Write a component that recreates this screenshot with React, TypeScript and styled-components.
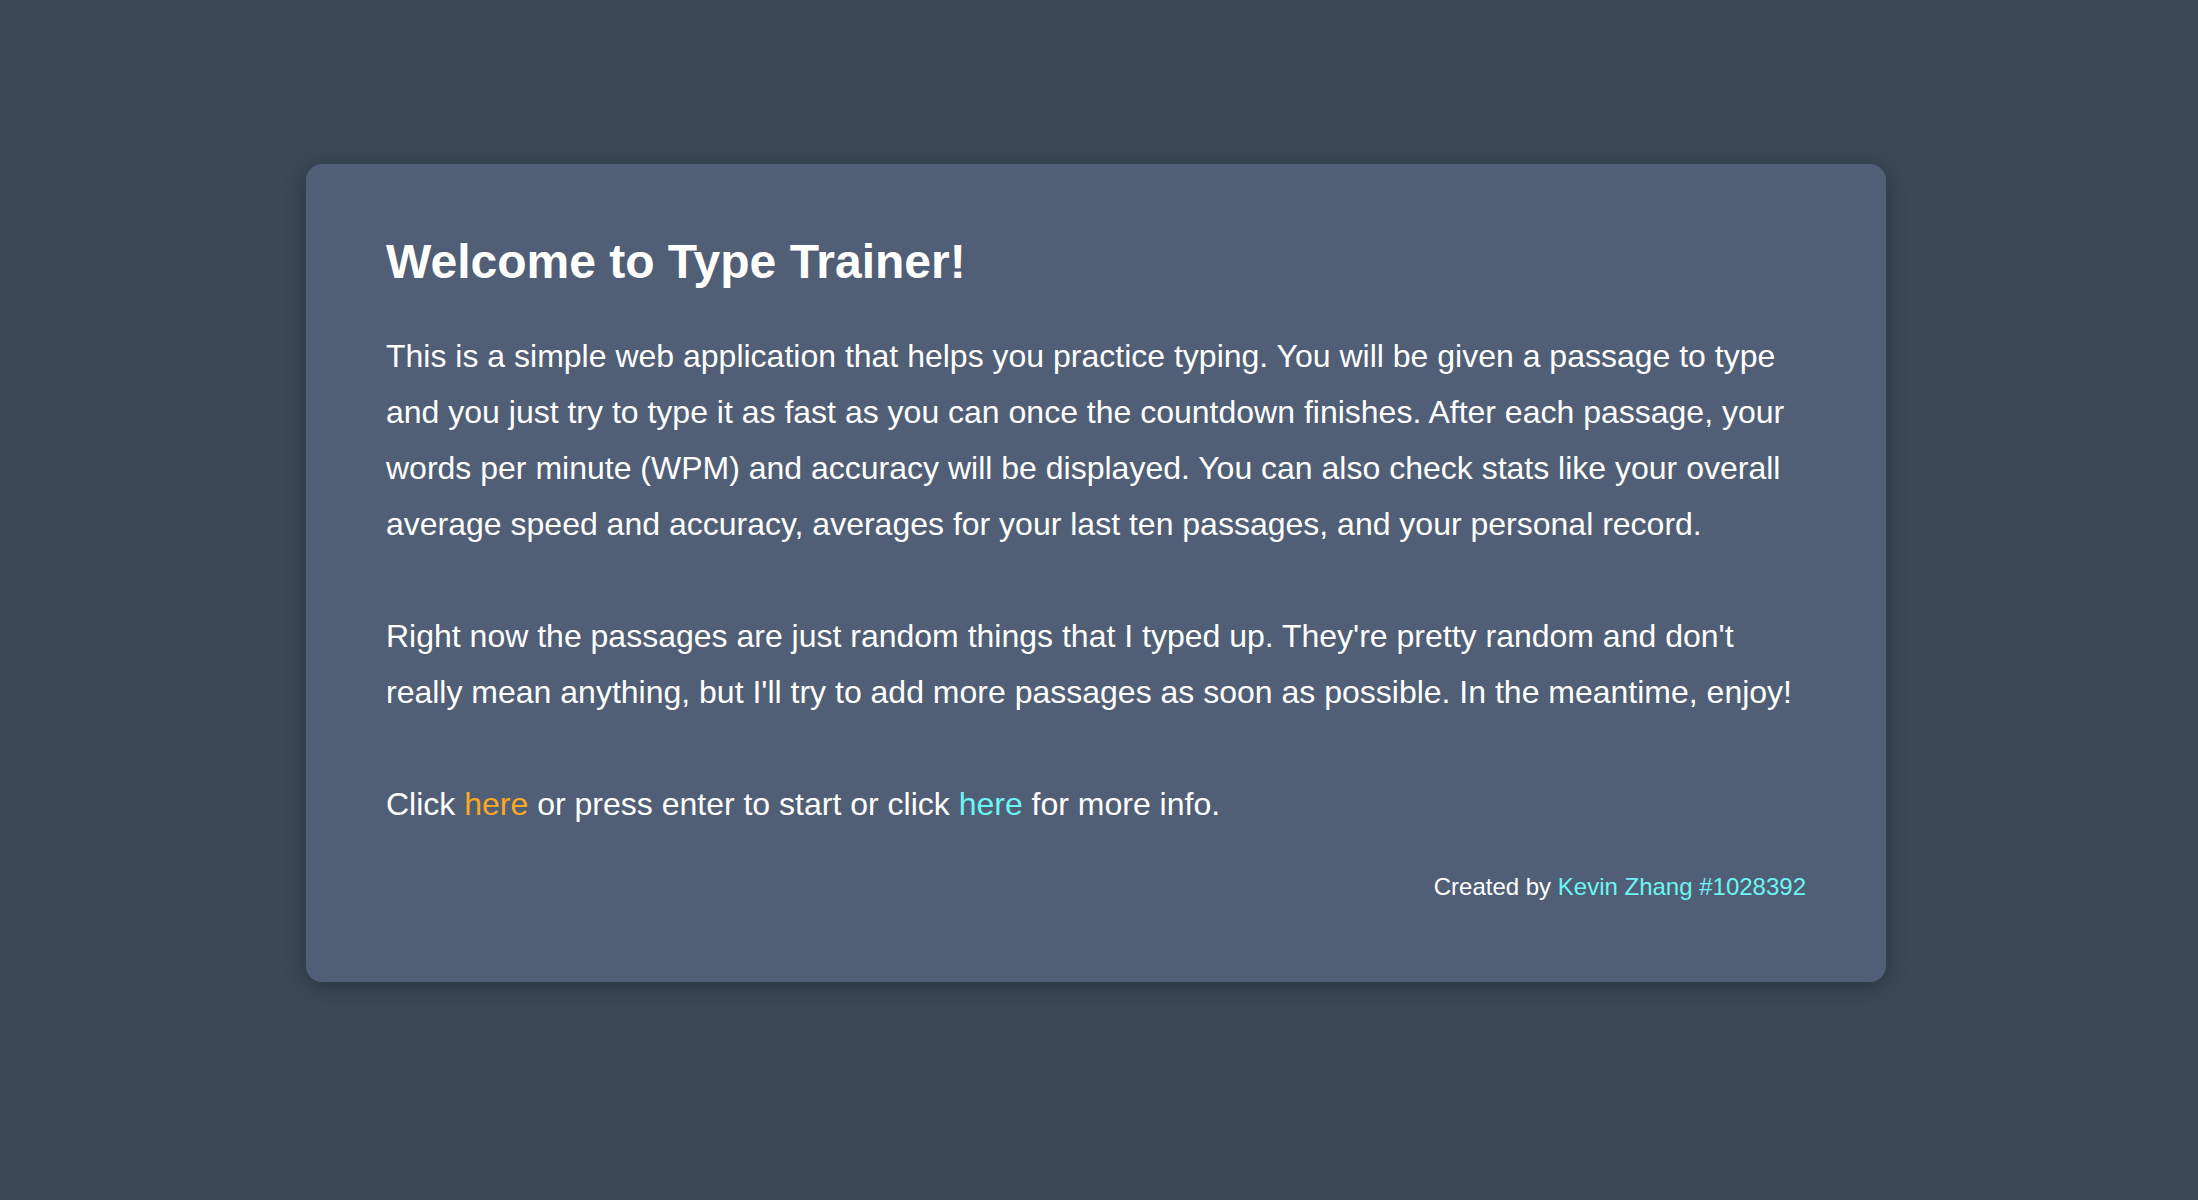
import React from "react";
import styled, { createGlobalStyle } from "styled-components";

const GlobalStyle = createGlobalStyle`
  html, body {
    margin: 0;
    padding: 0;
    background: #3b4856;
    min-height: 100vh;
  }
  body {
    font-family: "Liberation Sans", Arial, Helvetica, sans-serif;
    color: #ffffff;
    -webkit-font-smoothing: antialiased;
  }
`;

const Page = styled.div`
  min-height: 100vh;
  box-sizing: border-box;
  display: flex;
  justify-content: center;
  align-items: flex-start;
  padding: 164px 6px 0 0;
`;

const Card = styled.section`
  width: 1580px;
  box-sizing: border-box;
  background: #505f75;
  border-radius: 16px;
  box-shadow: 0 4px 22px rgba(20, 28, 38, 0.45);
  padding: 70px 80px 81px;
  display: flex;
  flex-direction: column;
`;

const Title = styled.h1`
  margin: 0 0 38px;
  font-size: 48px;
  line-height: 56px;
  font-weight: 700;
  color: #ffffff;
`;

const Paragraph = styled.p`
  margin: 0 0 56px;
  font-size: 32px;
  line-height: 56px;
  color: #ffffff;
  &:last-of-type {
    margin-bottom: 0;
  }
`;

const Link = styled.a<{ $tone: "orange" | "cyan" }>`
  color: ${(p) => (p.$tone === "orange" ? "#f9a825" : "#6cf5f4")};
  text-decoration: none;
  cursor: pointer;
`;

const Footer = styled.div`
  margin-top: 41px;
  text-align: right;
  font-size: 24px;
  line-height: 28px;
  color: #ffffff;
`;

export default function App() {
  return (
    <>
      <GlobalStyle />
      <Page>
        <Card>
          <Title>Welcome to Type Trainer!</Title>
          <Paragraph>
            This is a simple web application that helps you practice typing. You will be given a passage to type
            and you just try to type it as fast as you can once the countdown finishes. After each passage, your
            words per minute (WPM) and accuracy will be displayed. You can also check stats like your overall
            average speed and accuracy, averages for your last ten passages, and your personal record.
          </Paragraph>
          <Paragraph>
            Right now the passages are just random things that I typed up. They're pretty random and don't
            really mean anything, but I'll try to add more passages as soon as possible. In the meantime, enjoy!
          </Paragraph>
          <Paragraph>
            Click <Link $tone="orange">here</Link> or press enter to start or click{" "}
            <Link $tone="cyan">here</Link> for more info.
          </Paragraph>
          <Footer>
            Created by <Link $tone="cyan">Kevin Zhang #1028392</Link>
          </Footer>
        </Card>
      </Page>
    </>
  );
}
